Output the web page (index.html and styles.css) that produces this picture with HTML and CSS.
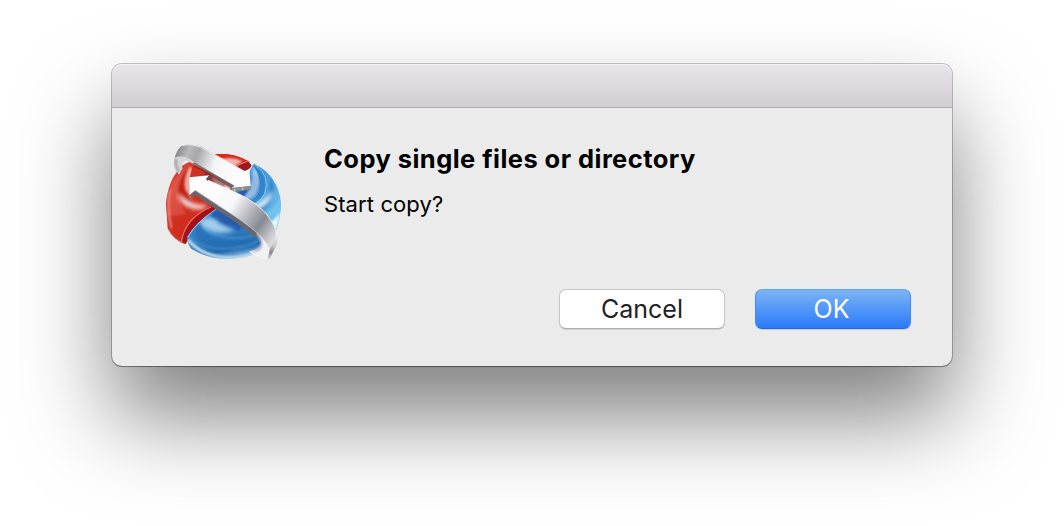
FILE: index.html
```
<!DOCTYPE html>
<html lang="en">
<head>
<meta charset="utf-8">
<title>Copy single files or directory</title>
<link rel="stylesheet" href="styles.css">
</head>
<body>
<main class="dialog" role="dialog">
  <header class="titlebar"></header>
  <section class="content">
    <svg class="app-icon" viewBox="0 0 420 405" aria-hidden="true">
      <defs>
        <linearGradient id="red" x1="0" y1="0" x2="1" y2="1">
          <stop offset="0" stop-color="#e24a3e"/><stop offset=".4" stop-color="#d33020"/><stop offset="1" stop-color="#b81f16"/>
        </linearGradient>
        <linearGradient id="blue" x1="0" y1="0" x2=".3" y2="1">
          <stop offset="0" stop-color="#2f62b4"/><stop offset=".4" stop-color="#3d8fd0"/><stop offset=".85" stop-color="#2167ad"/><stop offset="1" stop-color="#9ac9e8"/>
        </linearGradient>
        <linearGradient id="sky" x1="0" y1="0" x2="1" y2=".6">
          <stop offset="0" stop-color="#65aee2"/><stop offset=".5" stop-color="#3f92d3"/><stop offset="1" stop-color="#6fc3ee"/>
        </linearGradient>
        <linearGradient id="topband" gradientUnits="userSpaceOnUse" x1="62" y1="60" x2="280" y2="150">
          <stop offset="0" stop-color="#8b8b8d"/><stop offset=".13" stop-color="#b9b9bb"/><stop offset=".25" stop-color="#a8a8aa"/><stop offset=".5" stop-color="#f5f5f7"/><stop offset="1" stop-color="#fff"/>
        </linearGradient>
        <linearGradient id="band" gradientUnits="userSpaceOnUse" x1="110" y1="150" x2="365" y2="320">
          <stop offset="0" stop-color="#fff"/><stop offset=".44" stop-color="#f8f8fa"/><stop offset=".6" stop-color="#bfbfc4"/><stop offset=".77" stop-color="#868993"/><stop offset=".91" stop-color="#c5c5ca"/><stop offset="1" stop-color="#e8e8eb"/>
        </linearGradient>
        <linearGradient id="curl" gradientUnits="userSpaceOnUse" x1="370" y1="290" x2="335" y2="374">
          <stop offset="0" stop-color="#f7f7f8"/><stop offset=".5" stop-color="#c6c6c8"/><stop offset=".72" stop-color="#88888b"/><stop offset="1" stop-color="#e5e5e7"/>
        </linearGradient>
        <filter id="soft" x="-30%" y="-30%" width="160%" height="160%"><feGaussianBlur stdDeviation="7"/></filter>
        <filter id="fine" x="-20%" y="-20%" width="140%" height="140%"><feGaussianBlur stdDeviation="3"/></filter>
        <clipPath id="redclip"><path d="M95 84C63 100 36 151 33 210L38 280Q53 316 92 328Q106 285 183 221L290 92L280 78Q230 50 172 58Z"/></clipPath>
        <clipPath id="blueclip"><path d="M183 221Q118 265 96 307Q97 329 110 342Q170 379 245 370Q292 367 329 340L360 278L260 180Z"/></clipPath>
        <clipPath id="skyclip"><path d="M296 86Q370 121 378 205Q378 244 364 286L225 176Q267 145 296 86Z"/></clipPath>
      </defs>

      <!-- red half of the sphere -->
      <g clip-path="url(#redclip)">
        <path d="M20 40H300V345H20Z" fill="url(#red)"/>
        <path d="M44 160C62 120 90 93 115 90Q72 125 71 174Q72 218 94 236L38 245Z" fill="#ef8f87" opacity=".3" filter="url(#fine)"/>
        <path d="M102 94Q68 134 72 174Q79 207 104 226L122 210Q89 184 102 94Z" fill="#b72018" opacity=".85" filter="url(#fine)"/>
        <path d="M103 97Q82 133 91 165L112 195Q98 150 122 103Z" fill="#ffd3ca" opacity=".75" filter="url(#fine)"/>
        <path d="M67 174Q77 215 116 222Q151 226 157 209Q118 214 84 186Z" fill="#fff" opacity=".85" filter="url(#soft)"/>
        <path d="M46 163Q32 213 50 280" fill="none" stroke="#f6a39a" stroke-width="6" opacity=".8" filter="url(#fine)"/>
        <path d="M172 63Q216 48 266 72Q250 87 224 92Z" fill="#d92818"/>
        <path d="M188 76Q225 60 263 79L230 100Z" fill="#fff" opacity=".65" filter="url(#fine)"/>
        <path d="M230 104L276 79L293 92L260 120Z" fill="#9b1820"/>
        <path d="M232 100Q252 87 278 79" fill="none" stroke="#f57e75" stroke-width="3"/>
        <path d="M78 335L83 295Q117 236 171 214L188 222Q121 267 94 330Z" fill="#a51118"/>
        <path d="M78 326Q83 287 108 257Q135 229 168 216" fill="none" stroke="#ef6a61" stroke-width="4"/>
        <path d="M40 284Q55 318 95 330L90 336Q52 333 38 284Z" fill="#fff" opacity=".7" filter="url(#fine)"/>
      </g>

      <!-- recessed centre between the two arrows -->
      <path d="M116 90L245 158L252 202L165 150L110 130Z" fill="#8f2a28"/>
      <path d="M112 94L150 112L148 124L104 130Z" fill="#cf3023"/>
      <path d="M168 124L230 157L226 180L180 150Z" fill="#a98080" filter="url(#fine)"/>
      <path d="M209 150L225 158V180L209 172Z" fill="#e3cfcf"/>
      <path d="M236 162L256 168V190L238 180Z" fill="#2c4f96"/>

      <!-- blue segments -->
      <g clip-path="url(#skyclip)">
        <path d="M210 80H390V300H210Z" fill="url(#sky)"/>
        <path d="M222 181Q279 167 291 120L322 126Q316 184 262 209Z" fill="#285bb0" filter="url(#fine)"/>
        <path d="M294 91Q330 126 304 177Q292 199 255 198Q286 171 290 130Z" fill="#b4dcf5" opacity=".75" filter="url(#fine)"/>
        <path d="M301 90Q352 123 330 177Q309 213 270 215Q319 184 315 143Q312 113 294 93Z" fill="#2f86cc"/>
        <path d="M301 90Q347 121 329 176Q311 211 270 216" fill="none" stroke="#98d2f3" stroke-width="3"/>
        <path d="M345 126Q369 163 346 206Q322 236 300 234Q345 210 345 126Z" fill="#267cc5" opacity=".75" filter="url(#fine)"/>
        <path d="M353 165Q355 205 310 220Q294 225 286 215Q332 199 353 165Z" fill="#fff" opacity=".85" filter="url(#soft)"/>
        <path d="M375 195Q365 230 323 240Q351 247 374 222" fill="none" stroke="#7cc8f0" stroke-width="6" filter="url(#fine)"/>
        <path d="M376 232L364 288L346 262Q362 251 376 232Z" fill="#e6f7ff" filter="url(#fine)"/>
      </g>
      <g clip-path="url(#blueclip)">
        <path d="M80 180H370V390H80Z" fill="url(#blue)"/>
        <path d="M188 212L270 267L252 287Q202 274 167 243Z" fill="#285bad" filter="url(#fine)"/>
        <path d="M132 260Q155 242 179 253Q200 275 242 285Q193 304 153 281Q139 276 132 260Z" fill="#c2e1f5" opacity=".78" filter="url(#soft)"/>
        <path d="M135 265Q149 310 209 320Q267 329 315 310L302 338Q196 356 133 316Q112 300 123 276Z" fill="#256eb4" opacity=".7" filter="url(#fine)"/>
        <path d="M140 269Q170 307 235 309Q286 311 317 294" fill="none" stroke="#74b8e2" stroke-width="4" opacity=".5" filter="url(#fine)"/>
        <path d="M105 306Q145 350 234 339Q285 334 309 317" fill="none" stroke="#5ca7dc" stroke-width="5" opacity=".6" filter="url(#fine)"/>
        <path d="M98 313Q143 369 234 369Q283 366 326 341" fill="none" stroke="#badcf0" stroke-width="10" filter="url(#fine)"/>
        <path d="M182 222Q117 267 98 307" fill="none" stroke="#9bd2f5" stroke-width="4"/>
      </g>

      <!-- upper ribbon and right-pointing arrow -->
      <path d="M59 69Q50 96 72 119L83 100Q75 85 93 76L148 103L152 82L98 55Z" fill="#d5d5d7"/>
      <path d="M63 72Q58 93 73 111" fill="none" stroke="#89898c" stroke-width="5" filter="url(#fine)"/>
      <path d="M112 84L237 158L228 168L286 165V153L238 145L135 80Z" fill="#6c6c70"/>
      <path d="M59 68Q66 42 80 32Q101 24 137 34L269 108L283 102L287 153L229 159L239 152L117 82Q91 57 59 68Z" fill="url(#topband)"/>
      <path d="M82 32Q103 25 136 36L267 109" fill="none" stroke="#e9e9eb" stroke-width="3"/>
      <path d="M229 159L287 153V163L233 170Z" fill="#8e8f93"/>
      <path d="M239 161V168M263 158V166" stroke="#c4c4c7" stroke-width="4"/>

      <!-- lower ribbon, curl and left-pointing arrow -->
      <path d="M104 180L119 166L218 231Q285 270 318 308L296 304Q248 263 187 226L117 178L112 189Z" fill="#67686d"/>
      <path d="M304 294Q327 322 314 336Q305 345 283 349Q305 372 339 374L356 338L365 300L337 273Z" fill="#f1f1f4"/>
      <path d="M304 300Q322 324 312 336Q304 345 285 348Q304 354 317 342Q329 324 312 298Z" fill="#a9a6bd" filter="url(#fine)"/>
      <path d="M103 127L163 121L153 133L235 169Q318 206 349 257Q362 276 367 297L345 345Q334 316 302 291Q262 257 217 229L121 166L104 179Z" fill="url(#band)"/>
      <path d="M153 133L235 169Q318 206 349 257Q361 276 365 297" fill="none" stroke="#ececef" stroke-width="3"/>
      <path d="M122 167L217 229Q295 278 330 315" fill="none" stroke="#c4c4c8" stroke-width="2.5"/>
      <path d="M163 121L165 131L158 137L153 133Z" fill="#54545a"/>
      <path d="M363 290L371 297L366 328L344 371L337 374L345 340Q360 315 363 290Z" fill="url(#curl)"/>
    </svg>
    <div class="message">
      <h1 class="heading">Copy single files or directory</h1>
      <p class="question">Start copy?</p>
    </div>
  </section>
  <footer class="actions">
    <button class="button cancel">Cancel</button>
    <button class="button confirm">OK</button>
  </footer>
</main>
</body>
</html>
```
FILE: styles.css
```
* { box-sizing: border-box; }
body {
  margin: 0;
  padding: 64px 112px;
  height: 526px;
  overflow: hidden;
  background: #fff;
  font-family: Inter, "Liberation Sans", sans-serif;
}
.dialog {
  width: 840px;
  height: 302px;
  border-radius: 10px;
  background: #ebebeb;
  box-shadow: 0 0 0 1px rgba(0,0,0,.22), 0 1px 1px rgba(0,0,0,.25), 0 50px 90px rgba(0,0,0,.5);
}
.titlebar {
  height: 44px;
  border-radius: 10px 10px 0 0;
  border-bottom: 1px solid #afacaf;
  background: linear-gradient(#e8e6e9, #d1ced1);
  box-shadow: inset 0 1px 0 #f4f3f5;
}
.content {
  display: flex;
  height: 181px;
  padding: 27px 0 0 43px;
}
.app-icon { flex: none; width: 140px; height: 135px; }
.message { padding: 8px 0 0 29px; }
.heading {
  margin: 0;
  font-size: 25.5px;
  line-height: 32px;
  font-weight: 700;
  letter-spacing: .45px;
  color: #000;
  white-space: nowrap;
}
.question {
  margin: 16px 0 0;
  font-size: 22px;
  line-height: 26px;
  letter-spacing: .1px;
  color: #000;
}
.actions {
  display: flex;
  justify-content: flex-end;
  gap: 30px;
  padding-right: 41px;
}
.button {
  height: 40px;
  padding: 0;
  border: 0;
  border-radius: 7px;
  font: 400 25px/38px Inter, "Liberation Sans", sans-serif;
}
.cancel {
  width: 166px;
  color: #222;
  border: 1px solid #c5c5c5;
  border-bottom-color: #adadad;
  background: #fff;
  box-shadow: 0 1px 1px rgba(0,0,0,.12);
}
.confirm {
  width: 156px;
  color: #fff;
  border: 1px solid #4e94f2;
  border-color: #65a3ed #438bf6 #1d66f6;
  background: linear-gradient(#7cb4f4, #2a7afa);
  box-shadow: 0 1px 1px rgba(0,60,180,.15);
  padding-right: 3px;
}
```
